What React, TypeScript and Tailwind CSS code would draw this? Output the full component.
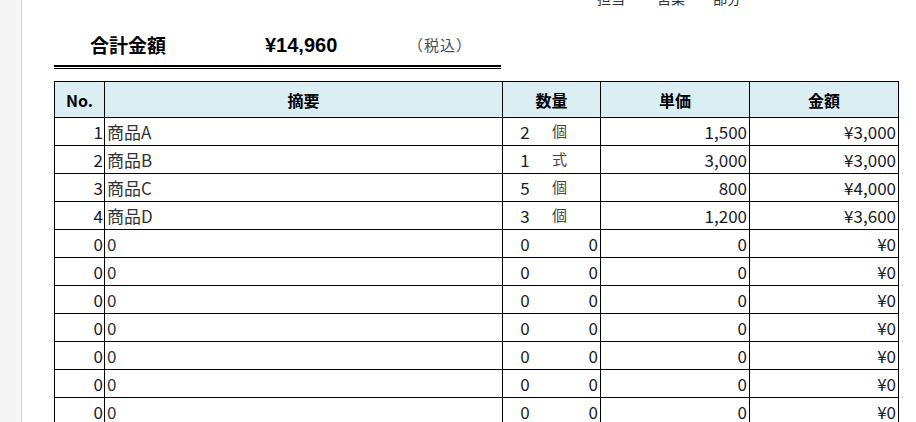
import React from 'react';

type Row = { no: number; name: string; qty: number; unit: string | null; price: number; amount: number };

const items: Row[] = [
  { no: 1, name: '商品A', qty: 2, unit: '個', price: 1500, amount: 3000 },
  { no: 2, name: '商品B', qty: 1, unit: '式', price: 3000, amount: 3000 },
  { no: 3, name: '商品C', qty: 5, unit: '個', price: 800, amount: 4000 },
  { no: 4, name: '商品D', qty: 3, unit: '個', price: 1200, amount: 3600 },
];

const empty: Row[] = Array.from({ length: 8 }, () => ({ no: 0, name: '0', qty: 0, unit: null, price: 0, amount: 0 }));

const fmt = (n: number) => n.toLocaleString('en-US');

const font = { fontFamily: '"Noto Sans CJK JP", "Noto Sans", sans-serif' };

const App = () => {
  const rows = [...items, ...empty];

  return (
    <div className="flex h-[422px] w-[916px] overflow-hidden bg-white text-[#1a1a2a]" style={font}>
      {/* sheet gutter */}
      <div className="w-[22px] shrink-0 border-r border-[#d2d2d2] bg-[#f5f5f5]" />

      <div className="flex flex-1 flex-col pl-[32px]">
        {/* cut-off header line */}
        <div className="flex h-[28px] shrink-0 items-start gap-[20px] pl-[543px] text-[14px] text-[#333]">
          <span className="-mt-[12px]">担当</span>
          <span className="-mt-[12px] pl-[12px]">営業</span>
          <span className="-mt-[12px] pl-[8px]">部分</span>
        </div>

        {/* total */}
        <div className="flex h-[34px] shrink-0 items-center">
          <span className="w-[211px] pl-[36px] text-[19px] font-bold text-black">合計金額</span>
          <span className="w-[143px] text-[20px] font-bold text-black" style={{ fontFamily: '"Liberation Sans", sans-serif' }}>
            ¥14,960
          </span>
          <span className="text-[15px] tracking-[1px] text-[#4a4a5a]">（税込）</span>
        </div>

        <div className="mt-[3px] w-[447px] shrink-0">
          <div className="h-[2px] bg-black" />
          <div className="mt-[1px] h-[1px] bg-black" />
        </div>

        {/* table */}
        <div className="mt-[12px] grid w-[845px] shrink-0 grid-cols-[50px_398px_98px_149px_149px] border-l border-t border-black text-[17px]">
          {['No.', '摘要', '数量', '単価', '金額'].map((h) => (
            <div
              key={h}
              className="flex h-[36px] items-center justify-center border-b border-r border-black bg-[#daeef3] text-[16px] font-bold text-black"
            >
              {h}
            </div>
          ))}

          {rows.map((r, i) => (
            <React.Fragment key={i}>
              <div className="flex h-[28px] items-center justify-end border-b border-r border-black pr-[1px]">{r.no}</div>
              <div className="flex h-[28px] items-center border-b border-r border-black pl-[2px] text-[#333]">{r.name}</div>
              <div className="flex h-[28px] items-center border-b border-r border-black">
                <span className="w-[44px] text-center">{r.qty}</span>
                {r.unit ? (
                  <span className="flex-1 pl-[5px] text-[15px] text-[#444]">{r.unit}</span>
                ) : (
                  <span className="flex-1 pr-[2px] text-right">0</span>
                )}
              </div>
              <div className="flex h-[28px] items-center justify-end border-b border-r border-black pr-[2px]">{fmt(r.price)}</div>
              <div className="flex h-[28px] items-center justify-end border-b border-r border-black pr-[2px]">¥{fmt(r.amount)}</div>
            </React.Fragment>
          ))}
        </div>
      </div>
    </div>
  );
};

export default App;
